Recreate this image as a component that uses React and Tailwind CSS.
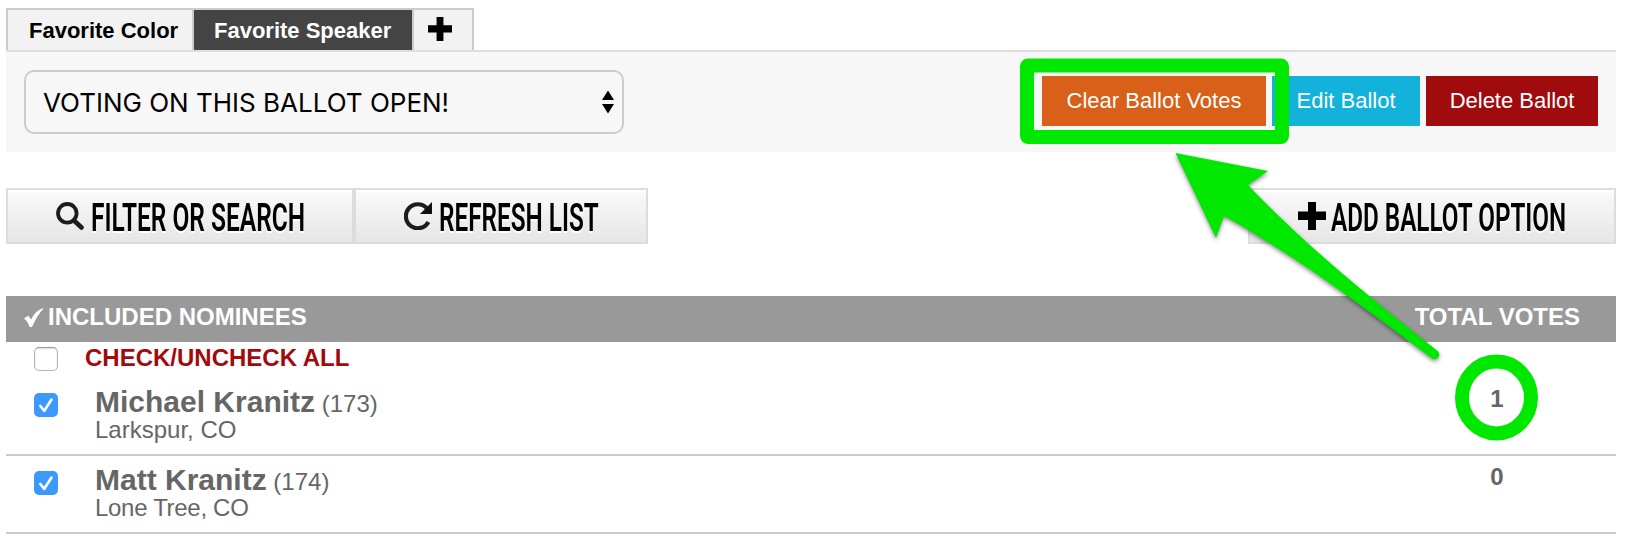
import React, { useState } from 'react'

const initialNominees = [
  { id: 173, name: 'Michael Kranitz', location: 'Larkspur, CO', votes: 1, included: true },
  { id: 174, name: 'Matt Kranitz', location: 'Lone Tree, CO', votes: 0, included: true, tight: true },
]

const PlusIcon = ({ className }) => (
  <svg className={className} viewBox="0 0 28 28" fill="currentColor">
    <path d="M10 0h8v9.5h10v8.5H18v10h-8V18H0V9.5h10z" />
  </svg>
)

const SearchIcon = () => (
  <svg className="h-7 w-7 shrink-0" viewBox="0 0 28 28" fill="none" stroke="#1c1c1c">
    <circle cx="11.3" cy="11.3" r="9.3" strokeWidth="3.8" />
    <path d="M18 18.5l7.5 7" strokeWidth="4.6" strokeLinecap="round" />
  </svg>
)

const RefreshIcon = () => (
  <svg className="h-7 w-7 shrink-0" viewBox="0 0 28 28" fill="none">
    <path d="M22.6 6A12 12 0 1 0 24.4 20" stroke="#1c1c1c" strokeWidth="4.2" />
    <path d="M28 0v12H16z" fill="#111" />
  </svg>
)

const Checkbox = ({ checked, onChange }) => (
  <button
    type="button"
    role="checkbox"
    aria-checked={checked}
    onClick={onChange}
    className={`block h-6 w-6 shrink-0 rounded-[5px] ${
      checked
        ? 'bg-[#3b99fc]'
        : 'border border-[#b4b4b4] border-t-[#999] bg-white shadow-[inset_0_1px_2px_#ddd]'
    }`}
  >
    {checked && (
      <svg viewBox="0 0 24 24" className="h-6 w-6" fill="none" stroke="#fff" strokeWidth="2.6" strokeLinecap="round" strokeLinejoin="round">
        <path d="M6.3 13l4 4.8L17.5 6.5" />
      </svg>
    )}
  </button>
)

const ToolButton = ({ icon, label, className, labelClass }) => (
  <button
    type="button"
    className={`flex h-14 items-center border-2 border-[#dcdcdc] bg-linear-to-b from-[#fafafa] to-[#e6e6e6] shadow-[inset_0_2px_0_#fff] ${className}`}
  >
    {icon}
    <span
      className={`block origin-left pt-[4px] whitespace-nowrap font-['Roboto'] text-[38px] leading-[48px] font-semibold [text-shadow:0_2px_0_#fff] ${labelClass}`}
    >
      {label}
    </span>
  </button>
)

const NomineeRow = ({ nominee, onToggle }) => (
  <div className="flex h-[78px] border-b-2 border-[#ccc] text-[#666]">
    <div className="w-[89px] pt-[15px] pl-7">
      <Checkbox checked={nominee.included} onChange={onToggle} />
    </div>
    <div className="flex-1 pt-[7px]">
      <div className="text-2xl leading-[34px]">
        <span className="text-[30px] font-bold">{nominee.name}</span> ({nominee.id})
      </div>
      <div className={`-mt-[5px] text-2xl leading-7 ${nominee.tight ? 'tracking-[-0.3px]' : ''}`}>
        {nominee.location}
      </div>
    </div>
    <div className="w-[238px] pt-[5px] text-center text-2xl font-bold">{nominee.votes}</div>
  </div>
)

// Green call-out: box round the clear button, ring round the vote count, arrow between them
const Annotations = () => (
  <svg className="pointer-events-none absolute top-0 left-0 h-[552px] w-[1638px]" viewBox="0 0 1638 552">
    <rect x="1027" y="65.5" width="255" height="71.5" rx="1" fill="none" stroke="#00e800" strokeWidth="14" strokeLinejoin="round" />
    <ellipse cx="1496.5" cy="397.5" rx="34.5" ry="36" fill="none" stroke="#00e800" strokeWidth="14" />
    <path
      className="drop-shadow-[0_2px_2px_rgba(0,0,0,0.45)]"
      d="M1175.5 153L1268 171L1248 185C1300 240 1370 298 1437 350.5A4.7 4.7 0 0 1 1432 358.5C1370 312 1298 257 1224 216L1216 238Z"
      fill="#00e800"
    />
  </svg>
)

const App = () => {
  const [nominees, setNominees] = useState(initialNominees)
  const [allChecked, setAllChecked] = useState(false)

  const toggleNominee = (id) => {
    setNominees(nominees.map(n => (n.id === id ? { ...n, included: !n.included } : n)))
  }

  const toggleAll = () => {
    setNominees(nominees.map(n => ({ ...n, included: !allChecked })))
    setAllChecked(!allChecked)
  }

  return (
    <div className="relative h-[552px] w-[1638px] overflow-hidden bg-white pt-2 pl-1.5 font-['Liberation_Sans',sans-serif] text-black">
      <div className="w-[1610px]">
        {/* Ballot tabs */}
        <div className="flex h-[42px] w-[468px] border-2 border-b-0 border-[#ccc] bg-[#f2f2f2] text-[22px] leading-[39px] font-bold">
          <button type="button" className="w-[186px] border-r-2 border-[#ccc] pl-[21px] text-left whitespace-nowrap">Favorite Color</button>
          <button type="button" className="w-[220px] border-r-2 border-[#ccc] bg-[#444] pl-5 text-left whitespace-nowrap text-white">Favorite Speaker</button>
          <button type="button" className="flex flex-1 justify-center pt-[7px] pr-1.5">
            <PlusIcon className="h-6 w-6" />
          </button>
        </div>

        {/* Ballot status and actions */}
        <div className="flex h-[102px] justify-between border-t-2 border-[#ddd] bg-[#f7f7f7] pr-[18px] pl-[18px]">
          <button
            type="button"
            className="mt-[18px] flex h-16 w-[600px] items-center justify-between rounded-[10px] border-2 border-[#ccc] pr-2 pl-[17px] font-['Inter'] text-[26px]"
          >
            <span className="pt-px whitespace-nowrap">VOTING ON THIS BALLOT OPEN!</span>
            <svg className="h-6 w-3" viewBox="0 0 12 24">
              <path d="M6 0.5l6 9.5H0zM6 23.5l6-9.5H0z" />
            </svg>
          </button>
          <div className="mt-6 flex gap-1.5 text-[22px] leading-[49px] whitespace-nowrap text-white">
            <button type="button" className="h-[50px] w-[224px] bg-[#d86018] pb-px">Clear Ballot Votes</button>
            <button type="button" className="h-[50px] w-[148px] bg-[#12b2da] pb-px">Edit Ballot</button>
            <button type="button" className="h-[50px] w-[172px] bg-[#a00b0d] pb-px">Delete Ballot</button>
          </div>
        </div>

        {/* Toolbar */}
        <div className="mt-9 flex">
          <ToolButton icon={<SearchIcon />} label="FILTER OR SEARCH" className="w-[348px] pl-12" labelClass="ml-[7px] scale-x-[0.645]" />
          <ToolButton icon={<RefreshIcon />} label="REFRESH LIST" className="w-[294px] pl-12" labelClass="ml-[7px] scale-x-[0.64]" />
          <ToolButton icon={<PlusIcon className="h-7 w-7 shrink-0" />} label="ADD BALLOT OPTION" className="ml-auto w-[368px] pl-12" labelClass="ml-[5px] scale-x-[0.638]" />
        </div>

        {/* Nominee list */}
        <div className="mt-[52px] flex h-[46px] items-start bg-[#999] pt-1 text-2xl leading-[34px] font-bold text-white">
          <svg className="mt-2 ml-[18px] h-[19px] w-5" viewBox="0 0 20 19" fill="#fff">
            <path d="M0 10.5L4.2 7.8L7.2 11.5C9.5 6.5 13.5 1.5 20 0C15 5 11 12 8 19H5.6C4.5 15.5 2.8 12.8 0 10.5z" />
          </svg>
          <span className="ml-1">INCLUDED NOMINEES</span>
          <span className="mr-9 ml-auto">TOTAL VOTES</span>
        </div>
        <div className="flex h-9 text-2xl leading-8 font-bold text-[#a00b0d]">
          <div className="w-[79px] pt-[5px] pl-7">
            <Checkbox checked={allChecked} onChange={toggleAll} />
          </div>
          <span>CHECK/UNCHECK ALL</span>
        </div>
        {nominees.map(nominee => (
          <NomineeRow key={nominee.id} nominee={nominee} onToggle={() => toggleNominee(nominee.id)} />
        ))}
      </div>
      <Annotations />
    </div>
  )
}

export default App
